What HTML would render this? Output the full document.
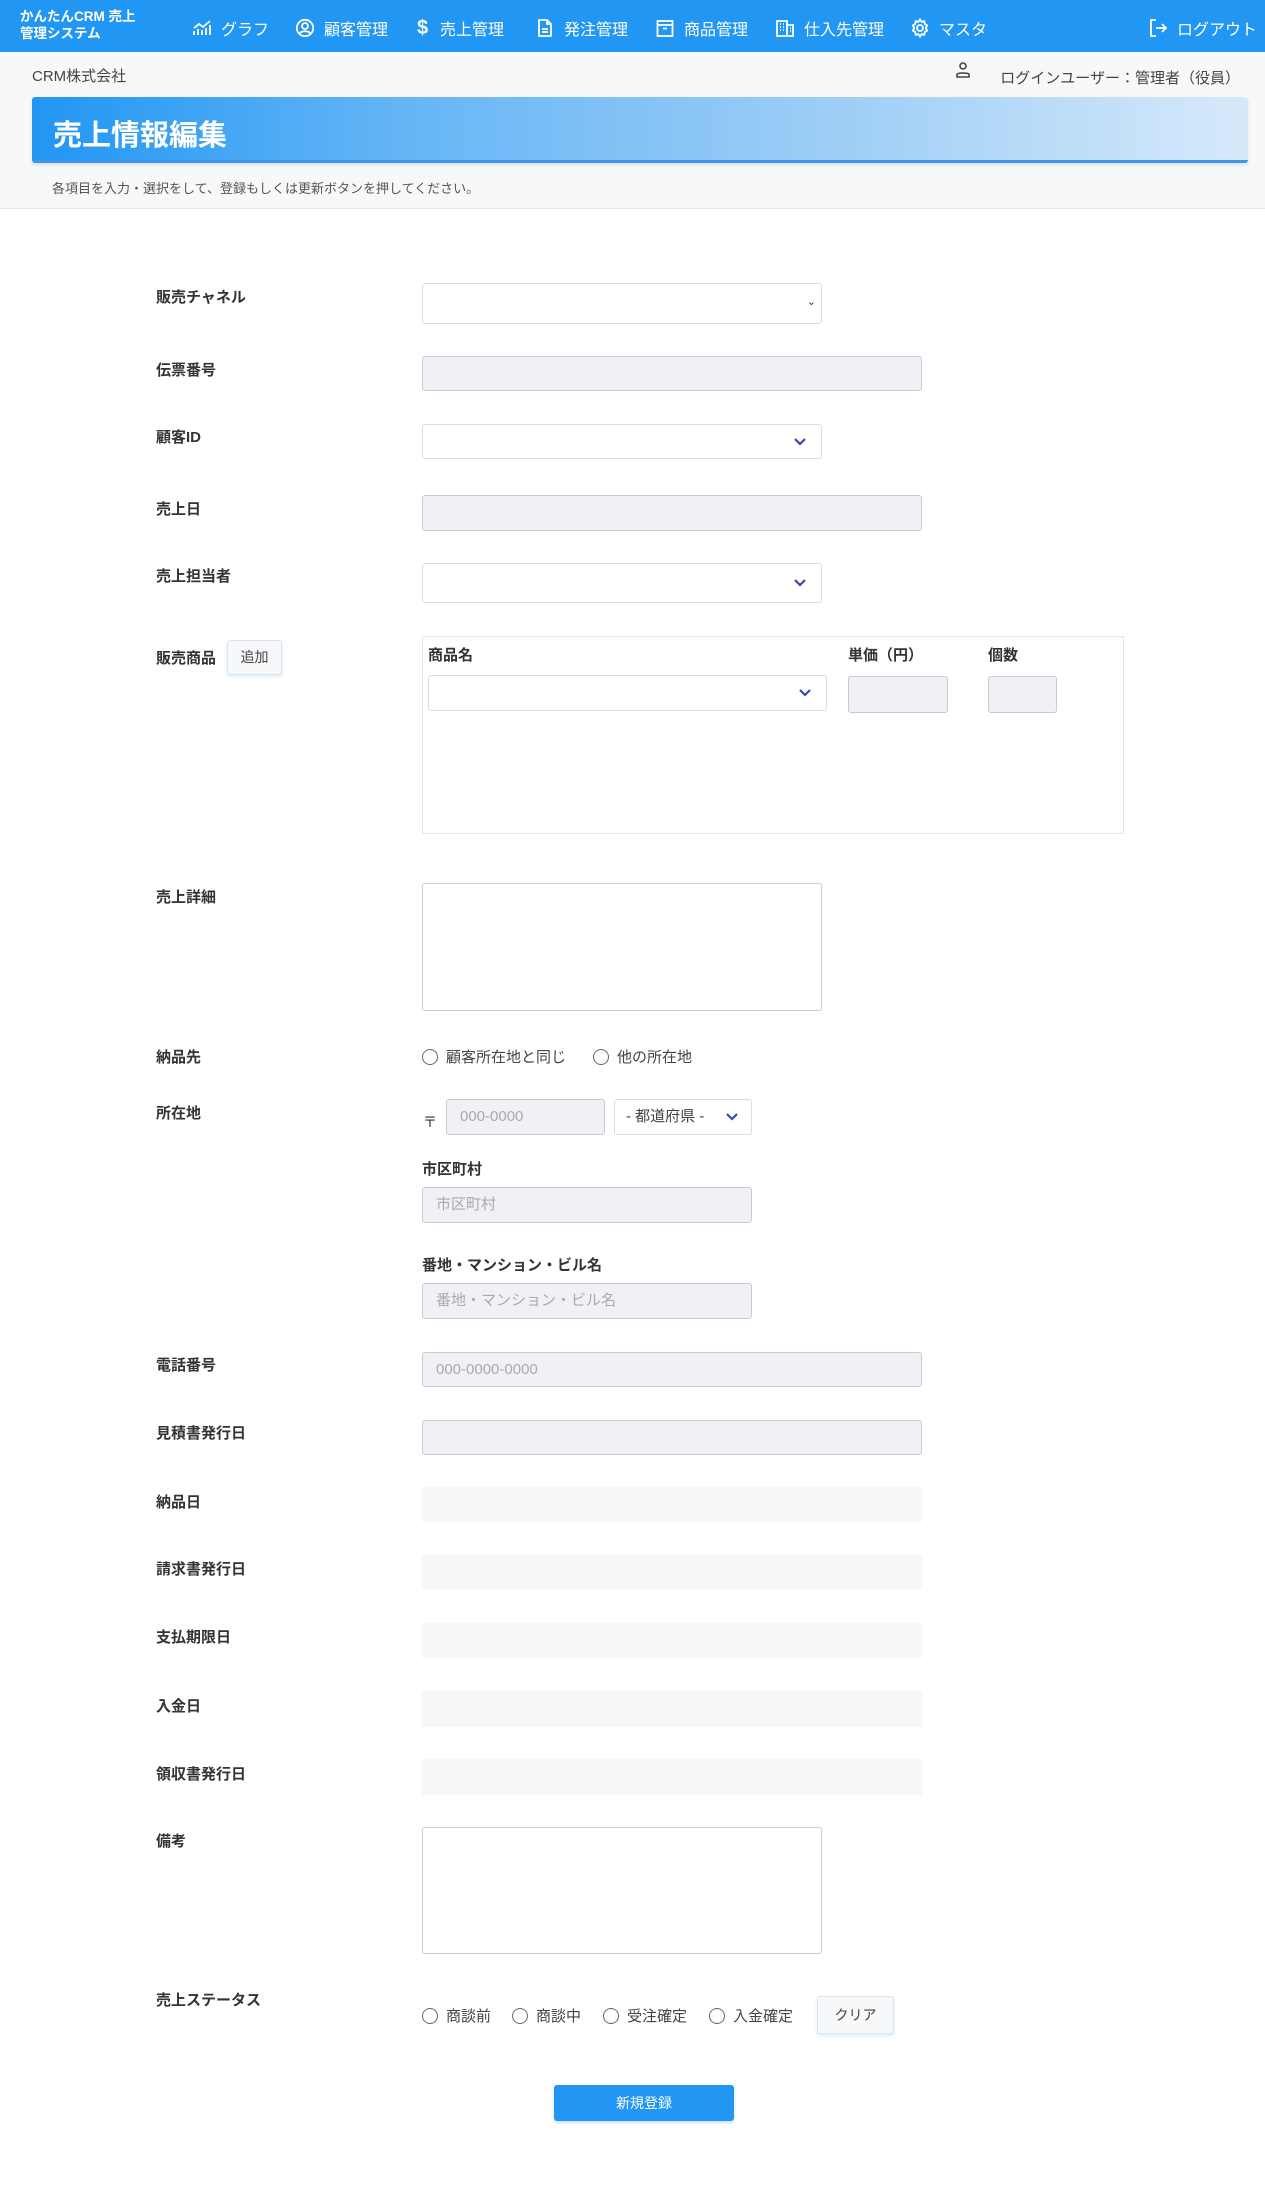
<!DOCTYPE html>
<html><head><meta charset="utf-8"><style>
*{box-sizing:border-box;margin:0;padding:0}
body{width:1265px;height:2188px;position:relative;background:#fff;font-family:"Liberation Sans","Noto Sans CJK JP",sans-serif;color:#333;overflow:hidden}
.a{position:absolute}
.hdr{left:0;top:0;width:1265px;height:52px;background:#2196f3;color:#fff}
.nav{top:16px;font-size:16px;color:#fff;display:flex;align-items:center;gap:9px;white-space:nowrap}
.nav svg{width:20px;height:20px}
.lbl{left:156px;font-size:15px;font-weight:bold;color:#333}
.sel{border:1px solid #dcdcdc;border-radius:3px;background:#fff}
.inp{border:1px solid #c9c9d6;border-radius:3px;background:#f0f1f4}
.pl{background:#f7f7f7;left:422px;width:500px;height:35px}
.chev{position:absolute;right:14px;top:50%;margin-top:-5px}
.rad{display:inline-block;width:16px;height:16px;border:1.6px solid #666;border-radius:50%;vertical-align:-3px;margin-right:8px}
.rtxt{font-size:15px;color:#444}
.ph{font-size:15px;color:#aaa;padding-left:13px;line-height:34px}
</style></head><body>
<div class="a hdr"></div>
<div class="a" style="left:20px;top:8px;font-size:13.5px;font-weight:bold;color:#fff;line-height:17px">かんたんCRM 売上<br>管理システム</div>
<div class="a nav" style="left:192px"><svg viewBox="0 0 20 20" fill="none" stroke="#fff" stroke-width="1.8"><path d="M2 17v-4M6 17v-6M10 17v-5M14 17v-7M18 17v-10M2 10l5-4 4 3 7-6"/></svg>グラフ</div>
<div class="a nav" style="left:295px"><svg viewBox="0 0 20 20" fill="none" stroke="#fff" stroke-width="1.8"><circle cx="10" cy="10" r="8.2"/><circle cx="10" cy="8" r="3"/><path d="M4.5 15.5c2-3 9-3 11 0"/></svg>顧客管理</div>
<div class="a nav" style="left:417px"><span style="font-size:20px;font-weight:bold;width:14px">$</span>売上管理</div>
<div class="a nav" style="left:535px"><svg viewBox="0 0 20 20" fill="none" stroke="#fff" stroke-width="1.8"><path d="M4 2h8l4 4v12H4z M12 2v4h4 M7 11h6M7 14h6"/></svg>発注管理</div>
<div class="a nav" style="left:655px"><svg viewBox="0 0 20 20" fill="none" stroke="#fff" stroke-width="1.8"><rect x="2.5" y="3" width="15" height="15"/><path d="M2.5 7h15M8 10.5h4"/></svg>商品管理</div>
<div class="a nav" style="left:775px"><svg viewBox="0 0 20 20" fill="none" stroke="#fff" stroke-width="1.8"><path d="M2 18V3h10v15M12 7h6v11M1 18h18M5 6h1M8 6h1M5 9h1M8 9h1M5 12h1M8 12h1M15 10h1M15 13h1"/></svg>仕入先管理</div>
<div class="a nav" style="left:910px"><svg viewBox="0 0 20 20" fill="none" stroke="#fff" stroke-width="1.8"><circle cx="10" cy="10" r="3"/><path d="M10 1.5l1.5 2.3 2.7-.6.6 2.7 2.3 1.5-1.3 2.6 1.3 2.6-2.3 1.5-.6 2.7-2.7-.6L10 18.5l-1.5-2.3-2.7.6-.6-2.7-2.3-1.5L4.2 10 2.9 7.4l2.3-1.5.6-2.7 2.7.6z"/></svg>マスタ</div>
<div class="a nav" style="left:1148px"><svg viewBox="0 0 20 20" fill="none" stroke="#fff" stroke-width="1.8"><path d="M8 2H3v16h5M8 10h10M14 6l4 4-4 4"/></svg>ログアウト</div>

<div class="a" style="left:0;top:52px;width:1265px;height:157px;background:#f7f8fa;border-bottom:1px solid #e3e3e3"></div>
<div class="a" style="left:32px;top:65px;font-size:15px;color:#444">CRM株式会社</div>
<div class="a" style="left:955px;top:61px;width:16px;height:18px"><svg width="16" height="18" viewBox="0 0 16 18" fill="none" stroke="#444" stroke-width="1.6"><circle cx="8" cy="5" r="3"/><path d="M2 16v-2.5c0-2 12-2 12 0V16z"/></svg></div>
<div class="a" style="right:25px;top:67px;font-size:15px;color:#444">ログインユーザー：管理者（役員）</div>
<div class="a" style="left:32px;top:97px;width:1216px;height:66px;border-radius:3px;background:linear-gradient(90deg,#2196f3,#64b5f6 30%,#9ccdf6 65%,#d6e9fa);border-bottom:3px solid #3b97ea;box-shadow:0 2px 3px rgba(0,0,0,.1)"></div>
<div class="a" style="left:53px;top:112px;font-size:29px;font-weight:bold;color:#fff">売上情報編集</div>
<div class="a" style="left:52px;top:178px;font-size:13px;color:#555">各項目を入力・選択をして、登録もしくは更新ボタンを押してください。</div>

<div class="a lbl" style="top:286px">販売チャネル</div>
<div class="a sel" style="left:422px;top:283px;width:400px;height:41px"><span style="position:absolute;right:5px;top:11px;font-size:11px;color:#333">⌄</span></div>
<div class="a lbl" style="top:359px">伝票番号</div>
<div class="a inp" style="left:422px;top:356px;width:500px;height:35px"></div>
<div class="a lbl" style="top:426px">顧客ID</div>
<div class="a sel" style="left:422px;top:424px;width:400px;height:35px"><svg class="chev" width="14" height="10" viewBox="0 0 14 10"><path d="M2 2l5 5 5-5" fill="none" stroke="#3949ab" stroke-width="2.2"/></svg></div>
<div class="a lbl" style="top:498px">売上日</div>
<div class="a inp" style="left:422px;top:495px;width:500px;height:36px"></div>
<div class="a lbl" style="top:565px">売上担当者</div>
<div class="a sel" style="left:422px;top:563px;width:400px;height:40px"><svg class="chev" width="14" height="10" viewBox="0 0 14 10"><path d="M2 2l5 5 5-5" fill="none" stroke="#3949ab" stroke-width="2.2"/></svg></div>
<div class="a lbl" style="top:647px">販売商品</div>
<div class="a" style="left:227px;top:640px;width:55px;height:35px;border:1px solid #dde3ea;border-radius:3px;background:#f7f8fa;box-shadow:0 2px 3px rgba(33,150,243,.15);font-size:14px;color:#444;text-align:center;line-height:33px">追加</div>
<div class="a" style="left:422px;top:636px;width:702px;height:198px;border:1px solid #e6e6e6"></div>
<div class="a" style="left:428px;top:644px;font-size:15px;font-weight:bold">商品名</div>
<div class="a" style="left:848px;top:644px;font-size:15px;font-weight:bold">単価（円）</div>
<div class="a" style="left:988px;top:644px;font-size:15px;font-weight:bold">個数</div>
<div class="a sel" style="left:428px;top:675px;width:399px;height:36px"><svg class="chev" width="14" height="10" viewBox="0 0 14 10"><path d="M2 2l5 5 5-5" fill="none" stroke="#3949ab" stroke-width="2.2"/></svg></div>
<div class="a inp" style="left:848px;top:676px;width:100px;height:37px"></div>
<div class="a inp" style="left:988px;top:676px;width:69px;height:37px"></div>
<div class="a lbl" style="top:886px">売上詳細</div>
<div class="a sel" style="left:422px;top:883px;width:400px;height:128px;border-color:#ccc"></div>
<div class="a lbl" style="top:1046px">納品先</div>
<div class="a rtxt" style="left:422px;top:1046px"><span class="rad"></span>顧客所在地と同じ</div>
<div class="a rtxt" style="left:593px;top:1046px"><span class="rad"></span>他の所在地</div>
<div class="a lbl" style="top:1102px">所在地</div>
<div class="a" style="left:423px;top:1112px;font-size:14px">〒</div>
<div class="a inp ph" style="left:446px;top:1099px;width:159px;height:36px">000-0000</div>
<div class="a sel" style="left:614px;top:1099px;width:138px;height:36px;font-size:15px;color:#444;padding-left:11px;line-height:34px">- 都道府県 -<svg class="chev" style="right:12px" width="14" height="10" viewBox="0 0 14 10"><path d="M2 2l5 5 5-5" fill="none" stroke="#3949ab" stroke-width="2.2"/></svg></div>
<div class="a" style="left:422px;top:1158px;font-size:15px;font-weight:bold">市区町村</div>
<div class="a inp ph" style="left:422px;top:1187px;width:330px;height:36px">市区町村</div>
<div class="a" style="left:422px;top:1254px;font-size:15px;font-weight:bold">番地・マンション・ビル名</div>
<div class="a inp ph" style="left:422px;top:1283px;width:330px;height:36px">番地・マンション・ビル名</div>
<div class="a lbl" style="top:1354px">電話番号</div>
<div class="a inp ph" style="left:422px;top:1352px;width:500px;height:35px">000-0000-0000</div>
<div class="a lbl" style="top:1422px">見積書発行日</div>
<div class="a inp" style="left:422px;top:1420px;width:500px;height:35px"></div>
<div class="a lbl" style="top:1491px">納品日</div>
<div class="a pl" style="top:1487px"></div>
<div class="a lbl" style="top:1558px">請求書発行日</div>
<div class="a pl" style="top:1555px"></div>
<div class="a lbl" style="top:1626px">支払期限日</div>
<div class="a pl" style="top:1623px"></div>
<div class="a lbl" style="top:1695px">入金日</div>
<div class="a pl" style="top:1691px;height:36px"></div>
<div class="a lbl" style="top:1763px">領収書発行日</div>
<div class="a pl" style="top:1759px;height:36px"></div>
<div class="a lbl" style="top:1830px">備考</div>
<div class="a sel" style="left:422px;top:1827px;width:400px;height:127px;border-color:#ccc"></div>
<div class="a lbl" style="top:1989px">売上ステータス</div>
<div class="a rtxt" style="left:422px;top:2005px"><span class="rad"></span>商談前</div>
<div class="a rtxt" style="left:512px;top:2005px"><span class="rad"></span>商談中</div>
<div class="a rtxt" style="left:603px;top:2005px"><span class="rad"></span>受注確定</div>
<div class="a rtxt" style="left:709px;top:2005px"><span class="rad"></span>入金確定</div>
<div class="a" style="left:817px;top:1996px;width:77px;height:38px;border:1px solid #dde3ea;border-radius:3px;background:#f7f8fa;box-shadow:0 2px 3px rgba(33,150,243,.15);font-size:14px;color:#444;text-align:center;line-height:36px">クリア</div>
<div class="a" style="left:554px;top:2085px;width:180px;height:36px;border-radius:3px;background:#2196f3;box-shadow:0 2px 3px rgba(33,150,243,.25);font-size:14px;color:#fff;text-align:center;line-height:36px">新規登録</div>
</body></html>
